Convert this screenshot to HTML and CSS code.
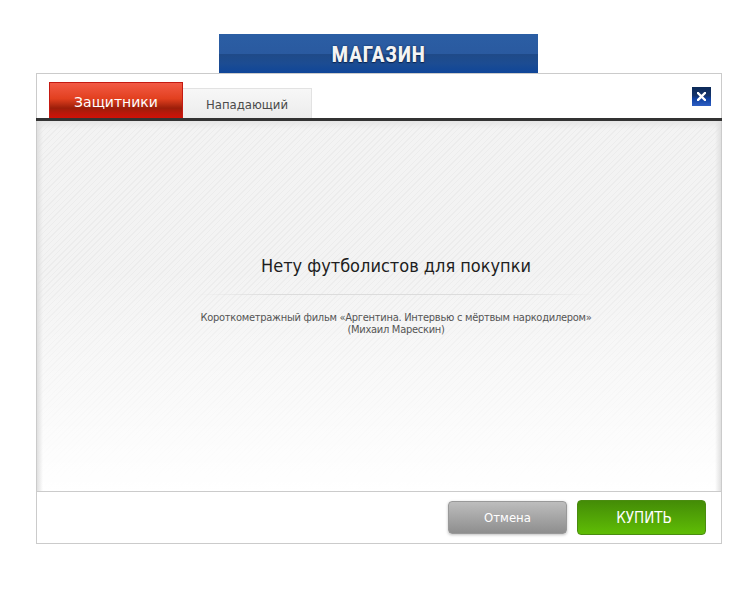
FILE: index.html
```html
<!DOCTYPE html>
<html lang="ru">
<head>
<meta charset="utf-8">
<title>Магазин</title>
<link rel="stylesheet" href="styles.css">
</head>
<body>
<div class="page">
  <div class="banner"><span class="banner-title">МАГАЗИН</span></div>
  <div class="dialog">
    <div class="tabs-row">
      <div class="tabs">
        <div class="tab tab-active">Защитники</div>
        <div class="tab tab-idle">Нападающий</div>
      </div>
      <button class="close" aria-label="Закрыть">
        <svg width="9" height="9" viewBox="0 0 9 9"><path d="M1 1 L8 8 M8 1 L1 8" stroke="#fff" stroke-width="2.4" stroke-linecap="square"/></svg>
      </button>
    </div>
    <div class="rule"></div>
    <div class="content">
      <h1 class="empty-title">Нету футболистов для покупки</h1>
      <div class="divider"></div>
      <p class="empty-note">Короткометражный фильм «Аргентина. Интервью с мёртвым наркодилером»<br>(Михаил Марескин)</p>
    </div>
    <div class="footer">
      <button class="btn btn-cancel">Отмена</button>
      <button class="btn btn-buy">КУПИТЬ</button>
    </div>
  </div>
</div>
</body>
</html>
```

FILE: styles.css
```css
html, body {
  margin: 0;
  padding: 0;
  background: #fff;
}

.page {
  width: 745px;
  height: 590px;
  padding-top: 34px;
  box-sizing: border-box;
  font-family: "DejaVu Sans", Verdana, sans-serif;
}

.banner {
  width: 319px;
  height: 39px;
  margin-left: 219px;
  background: linear-gradient(to bottom, #2b5ea4 0%, #2a5aa0 50%, #1f4a88 52%, #1c4c92 75%, #0f4699 100%);
  display: flex;
  align-items: center;
  justify-content: center;
}

.banner-title {
  font-family: "Liberation Sans Narrow", "Roboto Condensed", "Liberation Sans", sans-serif;
  font-weight: bold;
  font-size: 22px;
  color: #f4f4f4;
  letter-spacing: 0.5px;
  text-shadow: 0 1px 1px #0c2550, 0 0 2px #0c2550;
  margin-top: 2px;
}

.dialog {
  width: 686px;
  height: 471px;
  margin-left: 36px;
  border: 1px solid #cbcbcb;
  box-sizing: border-box;
  display: flex;
  flex-direction: column;
}

.tabs-row {
  height: 44px;
  display: flex;
  justify-content: space-between;
  align-items: flex-end;
  padding-left: 12px;
  padding-right: 10px;
}

.tabs {
  display: flex;
  align-items: flex-end;
}

.tab {
  box-sizing: border-box;
  display: flex;
  align-items: center;
  justify-content: center;
}

.tab-active {
  width: 134px;
  height: 36px;
  border: 1px solid #c41a12;
  border-bottom: none;
  background: linear-gradient(to bottom, #f25a45 0%, #e2401f 45%, #9c1e0a 72%, #b8180a 85%, #d01208 100%);
  color: #fff;
  font-size: 14px;
  padding-top: 2px;
}

.tab-idle {
  width: 129px;
  height: 30px;
  border: 1px solid #e2e2e2;
  border-bottom: none;
  border-left: none;
  background: linear-gradient(to bottom, #f7f7f7 0%, #ececec 100%);
  color: #4a4a4a;
  font-family: "DejaVu Sans Condensed", "DejaVu Sans", sans-serif;
  font-size: 13px;
  padding-top: 1px;
}

.close {
  width: 19px;
  height: 19px;
  margin: 0 0 12px 0;
  padding: 0;
  border: none;
  background: linear-gradient(to bottom, #0c2a58 0%, #13336a 45%, #0e3f9e 60%, #2d5ec4 100%);
  display: flex;
  align-items: center;
  justify-content: center;
  align-self: flex-end;
}

.rule {
  height: 3px;
  background: #333;
  margin: 0 -1px;
}

.content {
  height: 370px;
  box-sizing: border-box;
  background:
    linear-gradient(to right, #e0e0e0 0px, rgba(240,240,240,0) 6px, rgba(240,240,240,0) calc(100% - 6px), #e0e0e0 100%),
    linear-gradient(to bottom, #e6e6e6 0px, rgba(240,240,240,0) 8px),
    linear-gradient(to bottom, rgba(255,255,255,0) 0%, rgba(255,255,255,0) 40%, #fff 100%),
    repeating-linear-gradient(135deg, #f3f3f3 0px, #f3f3f3 3px, #ececec 3px, #ececec 4px);
  display: flex;
  flex-direction: column;
  align-items: center;
  padding-top: 134px;
  padding-left: 34px;
}

.empty-title {
  margin: 0;
  font-family: "DejaVu Sans Condensed", "DejaVu Sans", sans-serif;
  font-weight: normal;
  font-size: 18px;
  color: #1e1e1e;
  line-height: 22px;
}

.divider {
  width: 400px;
  height: 1px;
  margin-top: 17px;
  background: linear-gradient(to right, rgba(220,220,220,0), #dcdcdc 20%, #dcdcdc 80%, rgba(220,220,220,0));
}

.empty-note {
  margin: 17px 0 0 0;
  font-family: "DejaVu Sans Condensed", "DejaVu Sans", sans-serif;
  font-size: 11px;
  line-height: 12px;
  color: #555;
  text-align: center;
  letter-spacing: -0.27px;
}

.footer {
  flex: 1;
  border-top: 1px solid #cbcbcb;
  display: flex;
  justify-content: flex-end;
  align-items: flex-start;
  gap: 10px;
  padding: 8px 15px 0 0;
}

.btn {
  font-family: "DejaVu Sans Condensed", "DejaVu Sans", sans-serif;
  border-radius: 4px;
  padding: 0;
  display: flex;
  align-items: center;
  justify-content: center;
  color: #fff;
  cursor: pointer;
}

.btn-cancel {
  width: 119px;
  height: 33px;
  margin-top: 1px;
  border: 1px solid #999;
  background: linear-gradient(to bottom, #bdbdbd 0%, #8e8e8e 100%);
  box-shadow: 0 1px 3px rgba(0,0,0,0.25);
  font-size: 13px;
}

.btn-buy {
  width: 129px;
  height: 35px;
  border: 1px solid #4a8c10;
  background: linear-gradient(to bottom, #448c07 0%, #5fbd05 100%);
  font-size: 15px;
  padding-left: 5px;
}
```
